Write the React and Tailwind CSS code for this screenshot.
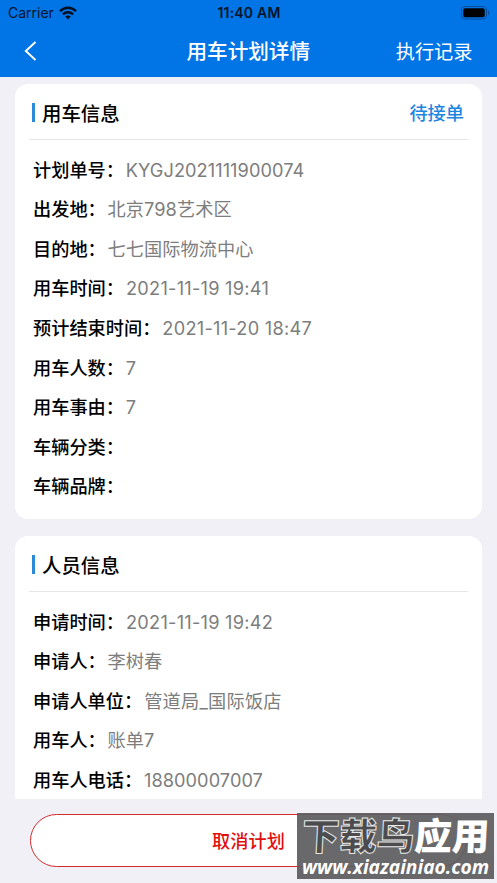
const planRows = [
  { label: '计划单号', value: 'KYGJ2021111900074' },
  { label: '出发地', value: '北京798艺术区' },
  { label: '目的地', value: '七七国际物流中心' },
  { label: '用车时间', value: '2021-11-19 19:41', wide: true },
  { label: '预计结束时间', value: '2021-11-20 18:47', wide: true },
  { label: '用车人数', value: '7' },
  { label: '用车事由', value: '7' },
  { label: '车辆分类', value: '' },
  { label: '车辆品牌', value: '' },
];

const personRows = [
  { label: '申请时间', value: '2021-11-19 19:42', wide: true },
  { label: '申请人', value: '李树春' },
  { label: '申请人单位', value: '管道局_国际饭店', wide: true },
  { label: '用车人', value: '账单7' },
  { label: '用车人电话', value: '18800007007' },
];

function StatusBar() {
  return <div className="grid grid-cols-3 items-center h-[26px] pl-2 pr-[7px] text-[14px] text-[#04142b]">
    <div className="flex items-center gap-[5px]">
      <span className="pb-px">Carrier</span>
      <svg className="mb-px" width="18" height="14" viewBox="0 0 18 14" fill="none" stroke="#04101f" strokeWidth="2.4">
        <path d="M1 5.2C5.5 0.6 12.5 0.6 17 5.2" />
        <path d="M3.9 8.3C6.8 5.5 11.2 5.5 14.1 8.3" />
        <path d="M6.2 10.6C7.8 9.1 10.2 9.1 11.8 10.6L9 13.4Z" fill="#04101f" stroke="none" />
      </svg>
    </div>
    <span className="pb-px text-center font-semibold tracking-[0.2px]">11:40 AM</span>
    <svg className="mb-px justify-self-end" width="29" height="14" viewBox="0 0 29 14">
      <rect x="0.5" y="0.5" width="25" height="12.5" rx="3.5" fill="none" stroke="#0a4d9b" />
      <rect x="2.3" y="2.3" width="21.4" height="9" rx="1.8" fill="#000" />
      <path d="M27 4.7C28.7 5.2 28.7 8.4 27 8.9Z" fill="#0a4d9b" />
    </svg>
  </div>
}

function Card({ title, status, rows, className }) {
  return <section className={`mx-[15px] bg-white pl-[14px] pr-[14px] ${className}`}>
    <div className="flex h-[56px] items-center border-b border-[#e6e6e8] pl-[3px] pr-[4px] pt-[3px]">
      <span className="mb-px h-[19px] w-[3px] bg-[#2b8ad6]" />
      <h2 className="ml-[7px] pt-[3px] text-[19.4px] font-medium text-black">{title}</h2>
      {status && <span className="ml-auto pt-px text-[18.2px] font-medium text-[#1c86e0]">{status}</span>}
    </div>
    <dl className="pl-1 pt-[10.5px]">
      {rows.map(row => (
        <div key={row.label} className="flex h-[39.6px] items-center text-[18.2px] whitespace-nowrap">
          <dt className="font-medium text-black">{row.label}：</dt>
          <dd className={`text-[#7d7d7d] ${row.wide ? 'pl-[2px] tracking-[0.25px]' : 'pl-[1.8px] tracking-[0.06px]'}`}>{row.value}</dd>
        </div>
      ))}
    </dl>
  </section>
}

function Watermark() {
  return <div className="absolute right-[3px] bottom-[4px] flex h-[66px] w-[197px] flex-col items-center overflow-hidden bg-[#5c5c5e]/92 whitespace-nowrap">
    <div className="mt-[4px] h-[40px] -skew-x-3 text-[37.5px] leading-[40px] font-black">
      <span className="text-[#4c4c4e] [-webkit-text-stroke:1px_#e8e8e8]">下载鸟</span>
      <span className="text-white">应用</span>
    </div>
    <div className="mt-px font-['Open_Sans',sans-serif] text-[19.2px] leading-[18px] font-bold italic text-white">www.xiazainiao.com</div>
  </div>
}

export default function App() {
  return <div className="relative flex h-[883px] w-[497px] flex-col overflow-hidden bg-[#f1f0f7] font-['Inter','Noto_Sans_CJK_SC',sans-serif]">
    <header className="h-[77px] shrink-0 bg-[#0174e6]">
      <StatusBar />
      <nav className="grid h-[51px] grid-cols-[1fr_auto_1fr] items-center pr-[24.5px] pl-6 text-white">
        <svg className="mb-[2px]" width="13" height="20" viewBox="0 0 13 20" fill="none" stroke="currentColor" strokeWidth="1.9">
          <path d="M11.5 1L1.8 10L11.5 19" />
        </svg>
        <h1 className="pt-px text-[20.6px] font-medium">用车计划详情</h1>
        <button className="justify-self-end pt-[2px] text-[19.2px]">执行记录</button>
      </nav>
    </header>
    <main className="flex h-[722px] shrink-0 flex-col gap-[17px] overflow-hidden pt-[7px]">
      <Card title="用车信息" status="待接单" rows={planRows} className="h-[435px] shrink-0 rounded-[13px]" />
      <Card title="人员信息" rows={personRows} className="h-[300px] shrink-0 rounded-t-[13px]" />
    </main>
    <footer className="px-[30px] pt-[15px]">
      <button className="h-[53px] w-full rounded-full border border-[#d42a2a] bg-white pt-[2px] text-[18.2px] font-medium text-[#e01010]">取消计划</button>
    </footer>
    <Watermark />
  </div>
}
